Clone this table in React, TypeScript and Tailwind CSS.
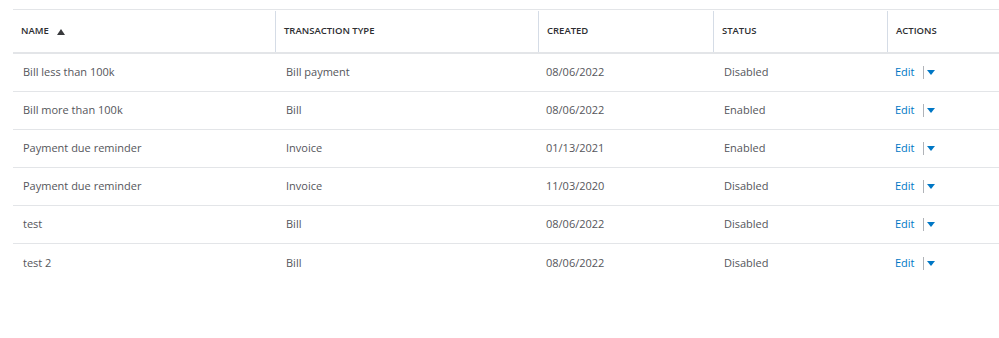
const rows = [
  { name: 'Bill less than 100k', type: 'Bill payment', created: '08/06/2022', status: 'Disabled' },
  { name: 'Bill more than 100k', type: 'Bill', created: '08/06/2022', status: 'Enabled' },
  { name: 'Payment due reminder', type: 'Invoice', created: '01/13/2021', status: 'Enabled' },
  { name: 'Payment due reminder', type: 'Invoice', created: '11/03/2020', status: 'Disabled' },
  { name: 'test', type: 'Bill', created: '08/06/2022', status: 'Disabled' },
  { name: 'test 2', type: 'Bill', created: '08/06/2022', status: 'Disabled' },
]

const cols = 'grid grid-cols-[262px_263px_175px_174px_1fr]'

export default function App() {
  return (
    <div className="w-[999px] h-[338px] bg-white pt-[9px] pl-[13px] font-['Open_Sans',sans-serif] text-[#393a3d]">
      <div className="border-t border-[#e3e5e8]">
        {/* header */}
        <div className={`${cols} h-[44px] border-b-2 border-[#e3e5e8] text-[9.5px] font-semibold text-[#2d2e31] pt-px`}>
          <div className="flex items-center gap-[8px] pl-2">
            NAME
            <svg width="8" height="6" viewBox="0 0 8 6"><path d="M4 0 L8 6 L0 6 Z" fill="#393a3d" /></svg>
          </div>
          <div className="flex items-center pl-2 border-l border-[#d5dce6]">TRANSACTION TYPE</div>
          <div className="flex items-center pl-2 border-l border-[#d5dce6]">CREATED</div>
          <div className="flex items-center pl-2 border-l border-[#d5dce6]">STATUS</div>
          <div className="flex items-center pl-2 border-l border-[#d5dce6]">ACTIONS</div>
        </div>

        {rows.map((r, i) => (
          <div
            key={i}
            className={`${cols} h-[38px] text-[11px] text-[#55565b] ${i < rows.length - 1 ? 'border-b border-[#e3e5e8]' : ''}`}
          >
            <div className="flex items-center pl-[10px]">{r.name}</div>
            <div className="flex items-center pl-[11px]">{r.type}</div>
            <div className="flex items-center pl-2">{r.created}</div>
            <div className="flex items-center pl-[11px]">{r.status}</div>
            <div className="flex items-center pl-2">
              <span className="text-[#0077c5]">Edit</span>
              <span className="ml-[8px] h-[13px] border-l border-[#b0b3b8]" />
              <svg className="ml-[3px]" width="8" height="5" viewBox="0 0 8 5"><path d="M0 0 L8 0 L4 5 Z" fill="#0077c5" /></svg>
            </div>
          </div>
        ))}
      </div>
    </div>
  )
}
